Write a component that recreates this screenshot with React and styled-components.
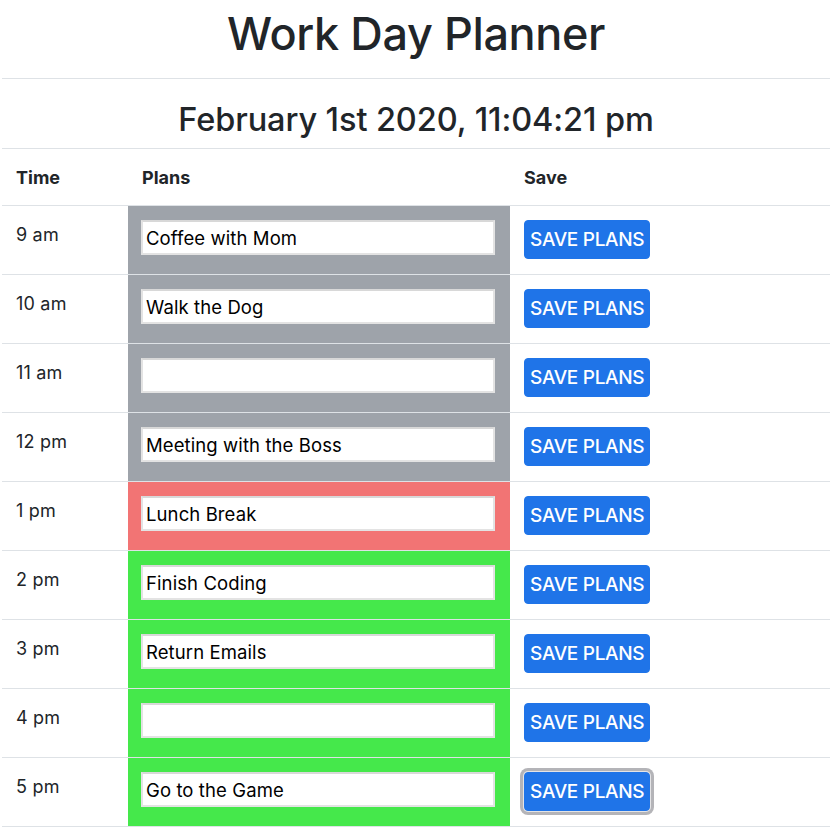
import styled, { createGlobalStyle } from 'styled-components';

const GlobalStyle = createGlobalStyle`
  body {
    margin: 0;
    background: #ffffff;
    font-family: Inter, "Liberation Sans", Arial, sans-serif;
    color: #212529;
  }
`;

const hours = [
  { label: '9 am', plan: 'Coffee with Mom', state: 'past' },
  { label: '10 am', plan: 'Walk the Dog', state: 'past' },
  { label: '11 am', plan: '', state: 'past' },
  { label: '12 pm', plan: 'Meeting with the Boss', state: 'past' },
  { label: '1 pm', plan: 'Lunch Break', state: 'present' },
  { label: '2 pm', plan: 'Finish Coding', state: 'future' },
  { label: '3 pm', plan: 'Return Emails', state: 'future' },
  { label: '4 pm', plan: '', state: 'future' },
  { label: '5 pm', plan: 'Go to the Game', state: 'future', focused: true },
];

const stateColors = {
  past: '#9ea3aa',
  present: '#f27474',
  future: '#45e84b',
};

function App() {
  return (
    <>
      <GlobalStyle />
      <Page>
        <Header>
          <Title>Work Day Planner</Title>
        </Header>
        <DateBar>February 1st 2020, 11:04:21 pm</DateBar>
        <Table>
          <colgroup>
            <col style={{ width: 126 }} />
            <col style={{ width: 382 }} />
            <col />
          </colgroup>
          <thead>
            <tr>
              <HeadCell>Time</HeadCell>
              <HeadCell>Plans</HeadCell>
              <HeadCell>Save</HeadCell>
            </tr>
          </thead>
          <tbody>
            {hours.map((hour) => (
              <Row key={hour.label}>
                <TimeCell>{hour.label}</TimeCell>
                <PlanCell $state={hour.state}>
                  <PlanInput type="text" defaultValue={hour.plan} />
                </PlanCell>
                <SaveCell>
                  <SaveButton $focused={hour.focused}>SAVE PLANS</SaveButton>
                </SaveCell>
              </Row>
            ))}
          </tbody>
        </Table>
      </Page>
    </>
  );
}

export default App;

const Page = styled.div`
  padding: 0 2px;
`;

const Header = styled.header`
  height: 78px;
  display: flex;
  align-items: center;
  justify-content: center;
  border-bottom: 1px solid #dee2e6;
`;

const Title = styled.h1`
  margin: 0;
  padding-bottom: 12px;
  font-size: 45px;
  font-weight: 500;
  letter-spacing: -0.4px;
  color: #212529;
`;

const DateBar = styled.div`
  height: 70px;
  display: flex;
  align-items: center;
  justify-content: center;
  padding-top: 11px;
  box-sizing: border-box;
  font-size: 32.5px;
  font-weight: 500;
  letter-spacing: -0.1px;
  border-bottom: 1px solid #dee2e6;
`;

const Table = styled.table`
  width: 100%;
  border-collapse: collapse;
  table-layout: fixed;
`;

const HeadCell = styled.th`
  height: 56px;
  padding: 0 14px;
  text-align: left;
  font-size: 18px;
  font-weight: 700;
  vertical-align: middle;
`;

const Row = styled.tr`
  height: 69px;
  border-top: 1px solid #dee2e6;

  &:last-child {
    border-bottom: 1px solid #dee2e6;
  }
`;

const TimeCell = styled.td`
  padding: 16px 14px 0;
  vertical-align: top;
  font-size: 18px;
  line-height: 25px;
  letter-spacing: 0.2px;
`;

const PlanCell = styled.td`
  padding: 14px 15px 0 13px;
  vertical-align: top;
  background: ${(props) => stateColors[props.$state]};
`;

const PlanInput = styled.input`
  box-sizing: border-box;
  width: 100%;
  height: 35px;
  padding: 2px 3px;
  border: 2px solid #e3e3e3;
  border-top-color: #d8d8d8;
  background: #ffffff;
  font-family: Inter, "Liberation Sans", Arial, sans-serif;
  font-size: 18.5px;
  letter-spacing: 0.1px;
  color: #000000;
  outline: none;
`;

const SaveCell = styled.td`
  padding: 14px 14px 0;
  vertical-align: top;
`;

const SaveButton = styled.button`
  height: 39px;
  padding: 0 5px;
  border: 1px solid #1f74e8;
  border-radius: 4px;
  background: #1f74e8;
  color: #ffffff;
  font-family: Inter, "Liberation Sans", Arial, sans-serif;
  font-size: 19px;
  font-weight: 500;
  letter-spacing: -0.3px;
  box-shadow: ${(props) => (props.$focused ? '0 0 0 1px #e4e4e6, 0 0 0 4px #b4b4b8' : 'none')};
`;
